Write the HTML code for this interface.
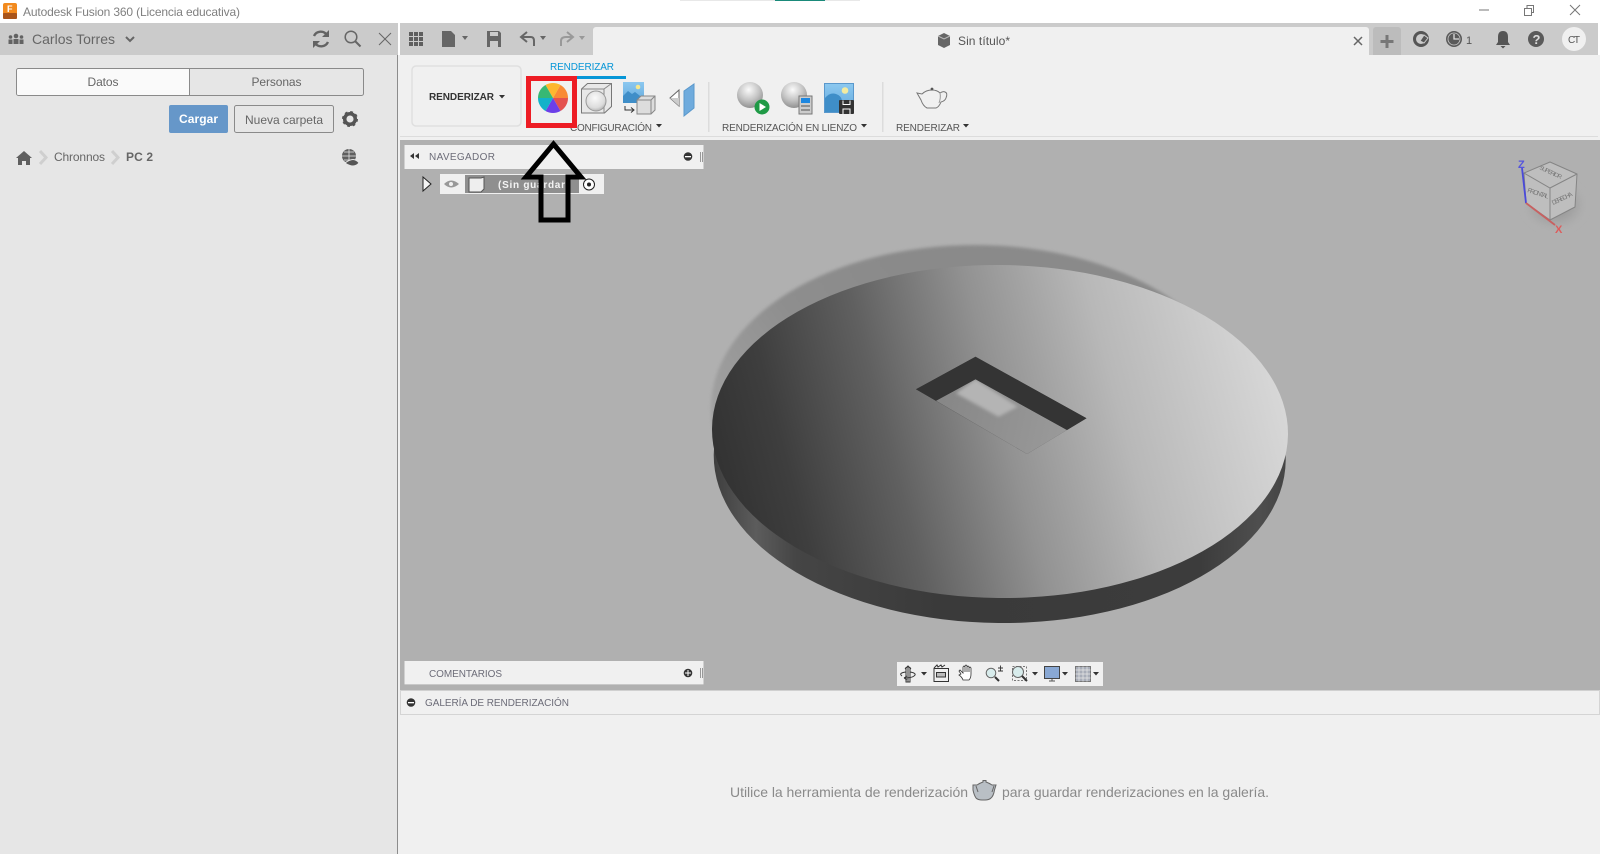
<!DOCTYPE html>
<html lang="es"><head><meta charset="utf-8"><title>Autodesk Fusion 360</title>
<style>
html,body{margin:0;padding:0;width:1600px;height:854px;overflow:hidden;background:#fff}
svg{display:block;position:absolute;left:0;top:0}
text{font-family:"Liberation Sans",sans-serif;font-size:12px;fill:#666}
.s{font-size:10px}
</style></head><body>
<svg width="1600" height="854" viewBox="0 0 1600 854" xmlns="http://www.w3.org/2000/svg">
<defs>
<linearGradient id="top" gradientUnits="userSpaceOnUse" x1="725" y1="505" x2="1285" y2="355">
<stop offset="0" stop-color="#323232"/><stop offset=".12" stop-color="#3e3e3e"/><stop offset=".3" stop-color="#606060"/><stop offset=".5" stop-color="#929292"/><stop offset=".7" stop-color="#b8b8b8"/><stop offset="1" stop-color="#dadada"/>
</linearGradient>
<linearGradient id="side" gradientUnits="userSpaceOnUse" x1="711" y1="0" x2="1288" y2="0">
<stop offset="0" stop-color="#3c3c3c"/><stop offset=".08" stop-color="#5c5c5c"/><stop offset=".15" stop-color="#454545"/><stop offset=".4" stop-color="#3a3a3a"/><stop offset=".85" stop-color="#3c3c3c"/><stop offset=".95" stop-color="#4e4e4e"/><stop offset="1" stop-color="#444"/>
</linearGradient>
<linearGradient id="floor" gradientUnits="userSpaceOnUse" x1="936" y1="400" x2="1067" y2="430">
<stop offset="0" stop-color="#868686"/><stop offset="1" stop-color="#9a9a9a"/>
</linearGradient>
<linearGradient id="shadow" gradientUnits="userSpaceOnUse" x1="711" y1="400" x2="900" y2="260">
<stop offset="0" stop-color="#a0a0a0"/><stop offset=".5" stop-color="#8e8e8e"/><stop offset="1" stop-color="#8a8a8a"/>
</linearGradient>
<radialGradient id="ball" cx=".45" cy=".3" r=".8"><stop offset="0" stop-color="#fafafa"/><stop offset=".5" stop-color="#c4c4c4"/><stop offset="1" stop-color="#808080"/></radialGradient>
<radialGradient id="ball2" cx=".45" cy=".35" r=".7"><stop offset="0" stop-color="#fafafa"/><stop offset=".7" stop-color="#dcdcdc"/><stop offset="1" stop-color="#aaa"/></radialGradient>
<radialGradient id="cubeShadow"><stop offset="0" stop-color="#8e8e8e"/><stop offset="1" stop-color="#b0b0b0"/></radialGradient>
<filter id="b2"><feGaussianBlur stdDeviation="1.6"/></filter>
<filter id="b4"><feGaussianBlur stdDeviation="3"/></filter>
<linearGradient id="sky" x1="0" y1="0" x2="0" y2="1"><stop offset="0" stop-color="#8cc8f0"/><stop offset="1" stop-color="#62a9dc"/></linearGradient>
</defs>

<!-- title bar -->
<rect width="1600" height="23" fill="#fff"/>
<rect x="680" y="0" width="180" height="1" fill="#e8e8e8"/><rect x="775" y="0" width="50" height="1" fill="#1a8a7a"/>
<rect x="3" y="3" width="14" height="16" rx="2" fill="#f28a1e"/><rect x="3" y="13" width="14" height="6" rx="1" fill="#a9541a"/>
<text x="7" y="12" style="font-size:9px;font-weight:bold;fill:#fff">F</text>
<text x="23" y="16" textLength="217" style="fill:#808080">Autodesk Fusion 360 (Licencia educativa)</text>
<path d="M1479 10h10" stroke="#777" fill="none"/>
<path d="M1524.500 8.500h7v7h-7zM1527 8V5.500h6.500v7h-2" stroke="#777" fill="none"/>
<path d="M1570 5l10 10M1580 5l-10 10" stroke="#777" fill="none"/>

<!-- left panel -->
<rect x="0" y="23" width="398" height="831" fill="#e6e6e6"/>
<rect x="0" y="23" width="398" height="32" fill="#cbcbcb"/>
<rect x="397" y="55" width="1" height="799" fill="#8c8c8c"/>
<rect x="398" y="55" width="2" height="799" fill="#f0f0f0"/>
<g fill="#636363"><circle cx="16" cy="36" r="2.300"/><circle cx="10.500" cy="37" r="1.800"/><circle cx="21.500" cy="37" r="1.800"/><rect x="13.500" y="39" width="5" height="5"/><rect x="8.500" y="39.500" width="4" height="4.500"/><rect x="19.500" y="39.500" width="4" height="4.500"/></g>
<text x="32" y="44" textLength="83" style="font-size:14px;fill:#666">Carlos Torres</text>
<path d="M126 37l4 4 4-4" stroke="#666" stroke-width="2" fill="none"/>
<g fill="none" stroke="#636363" stroke-width="2.400"><path d="M314 36a7.500 7.500 0 0 1 13-1"/><path d="M328 42a7.500 7.500 0 0 1-13 1"/></g>
<path d="M329 30v7h-7zM313 48v-7h7z" fill="#636363"/>
<circle cx="351" cy="37" r="5.800" fill="none" stroke="#666" stroke-width="1.500"/><path d="M355 41l5.500 5.500" stroke="#666" stroke-width="2"/>
<path d="M379 33l12 12M391 33l-12 12" stroke="#666"/>

<rect x="16.500" y="68.500" width="347" height="27" rx="2" fill="#e6e6e6" stroke="#8a8a8a"/>
<path d="M18 69h171v26H18a1.500 1.500 0 0 1-1-1V70z" fill="#fafafa"/>
<path d="M189.500 69v26" stroke="#8a8a8a"/>
<text x="87.500" y="86" textLength="31">Datos</text>
<text x="251.500" y="86" textLength="50">Personas</text>
<rect x="169" y="105" width="59" height="28" rx="2" fill="#6697c9"/>
<text x="179" y="123" textLength="39" style="font-weight:bold;fill:#fff">Cargar</text>
<rect x="234.500" y="105.500" width="99" height="27" rx="2" fill="#e6e6e6" stroke="#8a8a8a"/>
<text x="245" y="124" textLength="78">Nueva carpeta</text>
<circle cx="350" cy="119" r="5.300" fill="none" stroke="#555" stroke-width="3.500"/>
<circle cx="350" cy="119" r="7" fill="none" stroke="#555" stroke-width="2" stroke-dasharray="2.700 2.800"/>

<path d="M24 151l8 7h-2v7h-4v-4h-4v4h-4v-7h-2z" fill="#5f5f5f"/>
<path d="M40 151l6 6.500-6 6.500" stroke="#cfcfcf" stroke-width="3" fill="none"/>
<text x="54" y="161" textLength="51">Chronnos</text>
<path d="M112 151l6 6.500-6 6.500" stroke="#cfcfcf" stroke-width="3" fill="none"/>
<text x="126" y="161" textLength="27" style="font-weight:bold;fill:#666">PC 2</text>
<circle cx="349" cy="156" r="7" fill="#5f5f5f"/>
<path d="M342 156h14M349 149v14M344 152h10M344 160h10" stroke="#e6e6e6" stroke-width=".8"/>
<path d="M345 163q9-7 14 0q-5 6-14 0z" fill="#555" stroke="#e6e6e6"/>

<!-- top strip -->
<rect x="400" y="23" width="1198" height="32" fill="#cbcbcb"/>
<path d="M593 55V30a3 3 0 0 1 3-3h770a3 3 0 0 1 3 3v25z" fill="#f0f0f0"/>
<path d="M1373 55V30a3 3 0 0 1 3-3h22a3 3 0 0 1 3 3v25z" fill="#bcbcbc"/>
<path d="M1387 35v13M1380.500 41.500h13" stroke="#777" stroke-width="3"/>
<g fill="#5f5f5f"><rect x="409" y="32" width="4" height="4"/><rect x="414" y="32" width="4" height="4"/><rect x="419" y="32" width="4" height="4"/><rect x="409" y="37" width="4" height="4"/><rect x="414" y="37" width="4" height="4"/><rect x="419" y="37" width="4" height="4"/><rect x="409" y="42" width="4" height="4"/><rect x="414" y="42" width="4" height="4"/><rect x="419" y="42" width="4" height="4"/></g>
<path d="M442 31h9l4 4v12h-13z" fill="#666"/><path d="M462 36h6l-3 4z" fill="#666"/>
<path d="M487 31h12l2 2v14h-14z" fill="#666"/><rect x="490" y="32" width="8" height="4" fill="#cbcbcb"/><rect x="490" y="41" width="8" height="6" fill="#cbcbcb"/>
<path d="M527 32l-6 5 6 5M521 37h10q3 0 3 4v5" fill="none" stroke="#666" stroke-width="2"/><path d="M540 36h6l-3 4z" fill="#666"/>
<path d="M567 32l6 5-6 5M573 37h-7q-5 0-5 4v5" fill="none" stroke="#999" stroke-width="2"/><path d="M579 36h6l-3 4z" fill="#999"/>
<path d="M938 36l6-3 6 3v9l-6 3-6-3z" fill="#666"/><path d="M938 36l6 3 6-3" stroke="#bbb" fill="none"/>
<text x="958" y="45" textLength="52" style="fill:#555">Sin título*</text>
<path d="M1354 37l8 8M1362 37l-8 8" stroke="#666" stroke-width="1.500"/>
<circle cx="1421" cy="39" r="6.500" fill="none" stroke="#555" stroke-width="3"/><path d="M1420 41l4-6 4 3-4 5z" fill="#555" stroke="#cbcbcb"/>
<circle cx="1454" cy="39" r="8" fill="#5a5a5a"/><circle cx="1454" cy="39" r="6" fill="none" stroke="#cbcbcb" stroke-width=".8"/><path d="M1454 34v5h5" stroke="#ddd" stroke-width="1.300" fill="none"/>
<text x="1466" y="44" style="font-size:11px;fill:#555">1</text>
<path d="M1503 31q5 0 5 6v5l2 3h-14l2-3v-5q0-6 5-6zM1500.500 46h5l-2.500 2.500z" fill="#555"/>
<circle cx="1536" cy="39" r="8" fill="#5a5a5a"/>
<text x="1532.500" y="44" style="font-size:13px;font-weight:bold;fill:#ddd">?</text>
<circle cx="1574" cy="39" r="12" fill="#f0f0f0"/>
<text x="1568" y="43" textLength="12" class="s" style="fill:#555">CT</text>

<!-- ribbon -->
<rect x="400" y="55" width="1200" height="85" fill="#f0f0f0"/>
<rect x="400" y="136" width="1198" height="1" fill="#dcdcdc"/>
<rect x="412" y="66" width="109" height="60" rx="4" fill="#f0f0f0" stroke="#dfdfdf" stroke-width="1.500"/>
<text x="429" y="100" textLength="65" class="s" style="font-weight:bold;fill:#333">RENDERIZAR</text>
<path d="M499 95h6l-3 3.500z" fill="#333"/>
<text x="550" y="70" textLength="64" class="s" style="fill:#0696d7">RENDERIZAR</text>
<rect x="550" y="76" width="76" height="3" fill="#0696d7"/>

<!-- ribbon icons -->
<g transform="translate(553 98)">
<path d="M0 0L-7.500-13A15 15 0 0 1 7.500-13z" fill="#fdb72f"/>
<path d="M0 0L7.500-13A15 15 0 0 1 15 0z" fill="#f98a35"/>
<path d="M0 0L15 0A15 15 0 0 1 7.500 13z" fill="#e4524e"/>
<path d="M0 0L7.500 13A15 15 0 0 1-7.500 13z" fill="#6c3fe8"/>
<path d="M0 0L-7.500 13A15 15 0 0 1-15 0z" fill="#12b2c9"/>
<path d="M0 0L-15 0A15 15 0 0 1-7.500-13z" fill="#37b873"/>
</g>
<path d="M581.500 89l6-5.500h24v23l-7 6.500h-23z" fill="#e8e8e8" stroke="#777"/>
<path d="M581.500 89h22.500v24M604 89l7.500-5.500" fill="none" stroke="#888"/>
<circle cx="596" cy="101" r="10" fill="url(#ball2)" stroke="#999"/>
<rect x="623" y="82" width="21" height="21" fill="url(#sky)"/>
<circle cx="638" cy="87" r="2.300" fill="#f5e88f"/>
<path d="M623 96l5-5 4 3 3-2 9 7v4h-21z" fill="#3f8ec8"/>
<path d="M637 100l4-4h14v14l-4 4h-14z" fill="#ddd" stroke="#888"/><path d="M637 100h14v14M651 100l4-4" fill="none" stroke="#888"/>
<path d="M625 106v4h8M631 107.500l3 2.500-3 2.500" stroke="#333" fill="none"/>
<path d="M670 98l9-8v16z" fill="#fff" stroke="#666"/><path d="M670 98l9 8v-8z" fill="#ccc"/>
<path d="M684 91l10-7v24l-10 8z" fill="#6fabdd" stroke="#5a98cc"/>
<rect x="708" y="82" width="1.500" height="50" fill="#dcdcdc"/>
<circle cx="750" cy="95" r="13" fill="url(#ball)"/>
<circle cx="762" cy="107" r="7.500" fill="#1f9a46"/><path d="M759.500 103l6.500 4-6.500 4z" fill="#fff"/>
<circle cx="794" cy="95" r="13" fill="url(#ball)"/>
<rect x="799" y="96" width="13" height="18" fill="#ccc" stroke="#777"/><rect x="801" y="98" width="9" height="5" fill="#1d87e0"/><path d="M801 106h9M801 110h9" stroke="#555"/>
<rect x="824.500" y="83.500" width="29" height="29" fill="url(#sky)" stroke="#5a98cc"/>
<circle cx="845" cy="90.500" r="3.300" fill="#f2eaa0"/>
<path d="M825 112v-14q5-6 11-4 6 2 6 8v10z" fill="#3f8ec8"/>
<rect x="839" y="100" width="15" height="14" rx="1" fill="#333"/><path d="M843 100.500v4h7v-4M843 114v-5h7v5" fill="none" stroke="#fff"/>
<rect x="882" y="82" width="1.500" height="50" fill="#dcdcdc"/>
<path d="M917 93l5 1q4-4 10-4 5 0 8 3 3-2 5-1 3 1 1 6-1 3-5 4-2 5-5 6h-9q-4-2-6-8z" fill="#f0f0f0" stroke="#777"/>
<path d="M940 93q1 5-1 10" fill="none" stroke="#999"/>
<circle cx="932" cy="89" r="1.400" fill="#555"/>

<text x="570" y="131" textLength="82" class="s" style="fill:#555">CONFIGURACIÓN</text>
<path d="M656 124h6l-3 3.500z" fill="#333"/>
<text x="722" y="131" textLength="135" class="s" style="fill:#555">RENDERIZACIÓN EN LIENZO</text>
<path d="M861 124h6l-3 3.500z" fill="#333"/>
<text x="896" y="131" textLength="64" class="s" style="fill:#555">RENDERIZAR</text>
<path d="M963 124h6l-3 3.500z" fill="#333"/>

<!-- canvas -->
<rect x="400" y="140" width="1200" height="550" fill="#b0b0b0"/>

<!-- disk -->
<ellipse cx="975" cy="408" rx="264" ry="163" fill="url(#shadow)" filter="url(#b2)"/>
<g transform="rotate(.6 1000 431)">
<ellipse cx="1000" cy="457.500" rx="286" ry="165.500" fill="url(#side)"/>
<ellipse cx="1000" cy="431.500" rx="288" ry="166.500" fill="url(#top)"/>
</g>
<path d="M975.500 356.700L1086.500 418.300 1027 454 916 389.300z" fill="#343434"/>
<path d="M936 400.700L975.500 379.300 1067 430 1027 454z" fill="url(#floor)"/>
<path d="M975.500 379.300L1017.600 406.700 998.500 416.700 956 393.300z" fill="#b4b4b4" filter="url(#b2)"/>
<path d="M916 389.300L936 400.700 975.500 379.300 975.500 356.700zM975.500 356.700L975.500 379.300 1067 430 1086.500 418.300z" fill="#343434"/>

<!-- view cube -->
<ellipse cx="1555" cy="205" rx="30" ry="24" fill="url(#cubeShadow)" filter="url(#b4)"/>
<path d="M1550 162l27 12-2 33-25 13-24-17-2-30z" fill="#bebebe" stroke="#858585" stroke-linejoin="round"/>
<path d="M1524 173l26 15 27-14M1550 188v32" fill="none" stroke="#858585"/>
<path d="M1522 168l4 35" stroke="#4a4adb" stroke-width="1.800"/><path d="M1526 203l29 22" stroke="#c86060" stroke-width="1.800"/>
<text x="1518" y="168" style="font-size:11px;font-weight:bold;fill:#5555dd">Z</text>
<text x="1555" y="233" style="font-size:11px;font-weight:bold;fill:#dd5c5c">X</text>
<text transform="translate(1527 192) rotate(18)" style="font-size:6.500px;fill:#777" textLength="22">FRONTAL</text>
<text transform="translate(1553 205) rotate(-25)" style="font-size:6.500px;fill:#777" textLength="22">DERECHA</text>
<text transform="translate(1539 169) rotate(25)" style="font-size:6px;fill:#777" textLength="24">SUPERIOR</text>

<!-- navigator -->
<rect x="404.500" y="145" width="299" height="24" fill="#f0f0f0"/>
<path d="M414 153v6l-4-3zM419 153v6l-4-3z" fill="#333"/>
<text x="429" y="160" textLength="66" class="s" style="fill:#6c6c78">NAVEGADOR</text>
<circle cx="688" cy="156.500" r="4.300" fill="#333"/><rect x="685" y="156" width="6" height="1.300" fill="#fff"/>
<path d="M700.500 152v10M702.500 152v10" stroke="#999"/>
<path d="M423 177l8 7-8 7z" fill="#f4f4f4" stroke="#222"/>
<rect x="440" y="174" width="164" height="20" fill="#f0f0f0"/>
<path d="M444 184q7-7 15 0q-8 7-15 0z" fill="#999"/><circle cx="451" cy="184" r="2" fill="#f0f0f0"/>
<rect x="465" y="175" width="114" height="18" fill="#8f8f8f"/>
<path d="M469 178h12l3-1v12l-3 3h-12z" fill="#eee" stroke="#555"/>
<text x="498" y="188" textLength="67" class="s" style="font-weight:bold;fill:#f4f4f4">(Sin guardar</text>
<circle cx="589" cy="184.500" r="5.500" fill="#fff" stroke="#222"/><circle cx="589" cy="184.500" r="2" fill="#222"/>

<!-- comments -->
<rect x="404.500" y="661" width="299" height="24" fill="#f0f0f0"/>
<rect x="404.500" y="684" width="299" height="1" fill="#c8c8c8"/>
<text x="429" y="677" textLength="73" class="s" style="fill:#6c6c78">COMENTARIOS</text>
<circle cx="688" cy="673" r="4.300" fill="#333"/><path d="M685 673h6M688 670v6" stroke="#fff"/>
<path d="M700.500 668v10M702.500 668v10" stroke="#999"/>

<!-- view bar -->
<rect x="897" y="662" width="206" height="24" fill="#f0f0f0"/>
<g fill="none" stroke="#333">
<path d="M908 666v16M905 669l3-3 3 3M906 667v15h4v-15"/>
<path d="M902 676q-4-3 4-4M910 672q6 1 5 3-2 3-11 3M904 678l3-2M904 678l3 2"/>
<rect x="934" y="668.500" width="14.500" height="13"/><rect x="936.500" y="672.500" width="9" height="4.500" fill="#bbb"/>
<path d="M934 668l3-3 1 2 3-2 1 2 3-2"/>
<path d="M961 674l-2-3 1-1 3 3v-6l1-1 1 1v5-6l1-1 1 1v6-5l1-1 1 1v5-4l1-1 1 1v6q0 4-2 6h-6q-1-3-4-5z" fill="#fff" stroke-width=".8"/>
<circle cx="991" cy="673" r="4.800" fill="#d8ecec" stroke="#666"/>
<path d="M995 677l4 4" stroke-width="2"/><path d="M998 668h5M1000.500 665.500v5M998 671h5" stroke-width=".9"/>
<rect x="1012.500" y="666.500" width="14" height="14" stroke="#777" stroke-dasharray="2 1.500"/>
<circle cx="1018" cy="672" r="5.500" fill="#d8ecec" stroke="#666"/>
<path d="M1022 676l5 5" stroke-width="2"/>
<rect x="1044.500" y="666.500" width="15" height="12" fill="#89a8d4" stroke="#444"/><path d="M1049 681h6M1052 679v2" stroke="#555"/>
<rect x="1075.500" y="666.500" width="15" height="15" fill="#a8adb8" stroke="#777"/>
<path d="M1079 666.500v15M1083 666.500v15M1087 666.500v15M1075.500 670h15M1075.500 674h15M1075.500 678h15" stroke="#e8e8e8" stroke-width=".7"/>
</g>
<path d="M921 672h6l-3 3.500zM1032 672h6l-3 3.500zM1062 672h6l-3 3.500zM1093 672h6l-3 3.500z" fill="#333"/>

<!-- gallery -->
<rect x="398" y="690" width="1202" height="164" fill="#f0f0f0"/>
<rect x="400" y="690" width="1200" height="1" fill="#d0d0d0"/>
<rect x="400" y="714" width="1200" height="1" fill="#d4d4d4"/>
<rect x="400" y="690" width="1" height="25" fill="#d4d4d4"/>
<rect x="1599" y="690" width="1" height="25" fill="#d4d4d4"/>
<rect x="397" y="690" width="1" height="164" fill="#8c8c8c"/>
<circle cx="411" cy="702.500" r="4.300" fill="#333"/><rect x="408" y="702" width="6" height="1.300" fill="#fff"/>
<text x="425" y="706" textLength="144" class="s" style="fill:#6c6c78">GALERÍA DE RENDERIZACIÓN</text>
<text x="730" y="797" textLength="238" style="font-size:14px;fill:#8a8a8a">Utilice la herramienta de renderización</text>
<path d="M973 785h4q3-2 6-3v-1.500h3v1.500q3 1 6 3h4l-1.500 5q-1 6-3.500 8-2 2-6 2h-3q-4 0-6-2-2-3-3-8z" fill="#b9bfc5" stroke="#666"/>
<path d="M976 786l2 6M994 786l-2 6" stroke="#666" fill="none"/>
<text x="1002" y="797" textLength="267" style="font-size:14px;fill:#8a8a8a">para guardar renderizaciones en la galería.</text>

<!-- annotations -->
<rect x="528.500" y="78.500" width="46" height="47" fill="none" stroke="#ed1c24" stroke-width="5"/>
<path d="M553.500 144L581 177H568V220H541V177H526Z" fill="none" stroke="#000" stroke-width="5"/>
</svg>
</body></html>
